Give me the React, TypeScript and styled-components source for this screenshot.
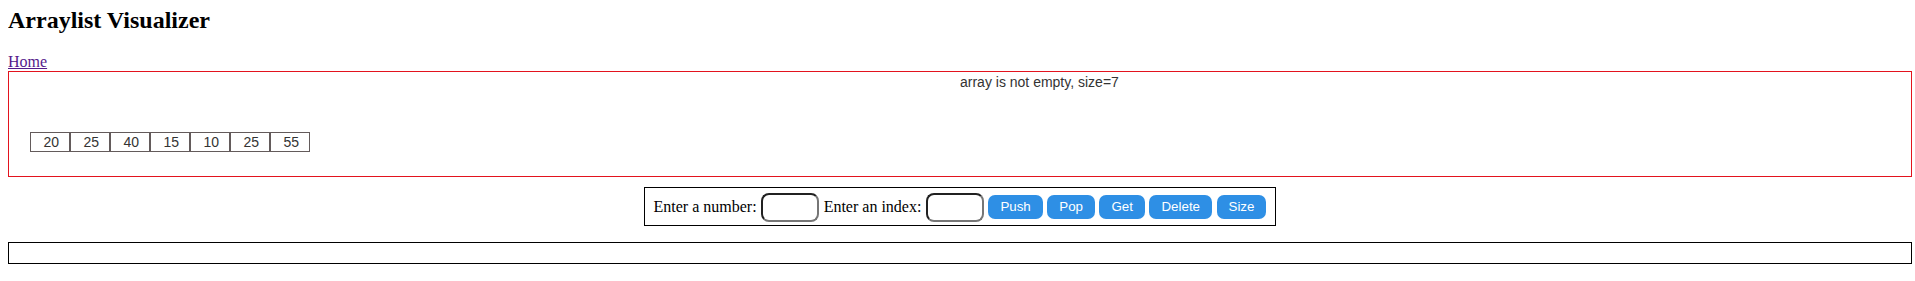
import React from 'react';
import styled, { createGlobalStyle } from 'styled-components';

const GlobalStyle = createGlobalStyle`
  body {
    margin: 0 3px 8px 8px;
    font-family: "Liberation Serif", "Times New Roman", serif;
    background: #fff;
  }
`;

const Title = styled.h2`
  font-size: 24px;
  font-weight: bold;
  margin: 6.5px 0 19.9px 0;
  color: #000;
`;

const HomeLink = styled.a`
  display: block;
  width: fit-content;
  font-size: 16px;
  color: #551a8b;
  text-decoration: underline;
`;

const ArrayPanel = styled.div`
  box-sizing: border-box;
  height: 106px;
  border: 1px solid #e3131e;
  font-family: "Liberation Sans", Arial, sans-serif;
  color: #333;
`;

const Status = styled.div`
  margin: 2px 0 0 50%;
  font-size: 14px;
`;

const CellRow = styled.div`
  display: flex;
  margin: 42px 0 0 21px;
`;

const Cell = styled.div`
  box-sizing: border-box;
  width: 40px;
  height: 20px;
  border: 1px solid #635b5b;
  font-size: 14px;
  line-height: 18px;
  text-align: right;
  padding-right: 10px;
`;

const ControlWrap = styled.div`
  display: flex;
  justify-content: center;
  margin-top: 10px;
`;

const Controls = styled.div`
  box-sizing: border-box;
  height: 39px;
  display: flex;
  align-items: center;
  gap: 4.5px;
  padding: 0 9px 0 9px;
  border: 1px solid #000;
`;

const Label = styled.span`
  font-size: 16px;
  color: #000;
`;

const NumberInput = styled.input`
  box-sizing: border-box;
  width: 58px;
  height: 29px;
  margin-top: 2px;
  border: 2px inset #767676;
  border-radius: 8px;
  padding: 1px 2px;
  outline: none;
`;

const ActionButton = styled.button`
  height: 24px;
  padding: 0 12px;
  border: none;
  border-radius: 7px;
  background: #2e8fe5;
  color: #fff;
  font-family: "Liberation Sans", Arial, sans-serif;
  font-size: 13.333px;
  cursor: pointer;
`;

const OutputBox = styled.div`
  box-sizing: border-box;
  height: 22px;
  margin-top: 16px;
  border: 1px solid #000;
`;

const values = [20, 25, 40, 15, 10, 25, 55];
const actions = ['Push', 'Pop', 'Get', 'Delete', 'Size'];

const App = () => {
  return (
    <>
      <GlobalStyle />
      <Title>Arraylist Visualizer</Title>
      <HomeLink href="#">Home</HomeLink>

      <ArrayPanel>
        <Status>array is not empty, size={values.length}</Status>
        <CellRow>
          {values.map((v, i) => (
            <Cell key={i}>{v}</Cell>
          ))}
        </CellRow>
      </ArrayPanel>

      <ControlWrap>
        <Controls>
          <Label>Enter a number:</Label>
          <NumberInput type="text" />
          <Label>Enter an index:</Label>
          <NumberInput type="text" />
          {actions.map(a => (
            <ActionButton key={a}>{a}</ActionButton>
          ))}
        </Controls>
      </ControlWrap>

      <OutputBox />
    </>
  );
};

export default App;
